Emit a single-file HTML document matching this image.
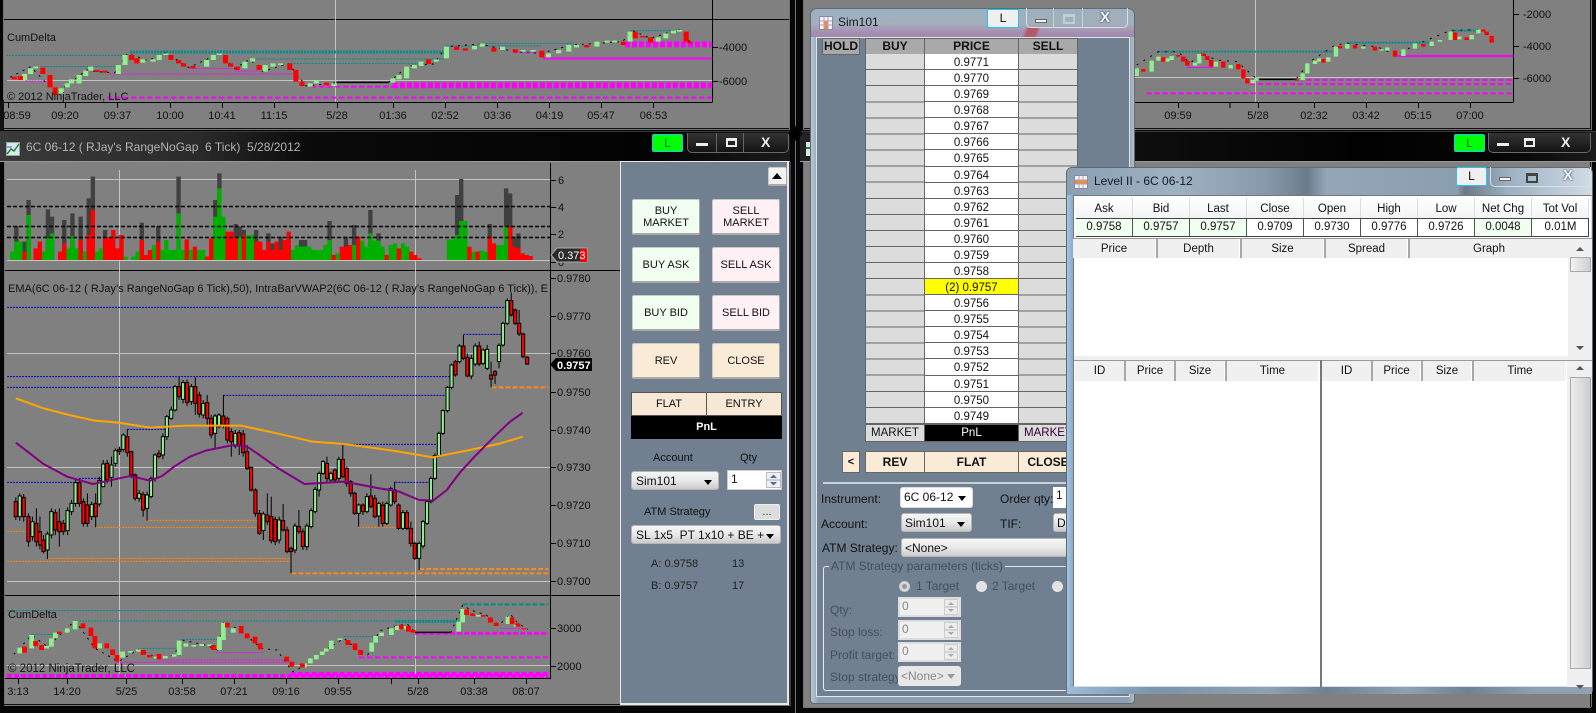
<!DOCTYPE html>
<html><head><meta charset="utf-8"><style>
*{box-sizing:border-box}
html,body{margin:0;padding:0;width:1596px;height:713px;overflow:hidden;background:#060606;font:11px "Liberation Sans",Arial,sans-serif;color:#111}
.a{position:absolute}
svg text{font-family:"Liberation Sans",Arial,sans-serif;font-size:11px;fill:#111}
.n{vector-effect:non-scaling-stroke;fill:none}
.c{display:flex;align-items:center;justify-content:center;text-align:center;line-height:12.5px}
.btn{border:1px solid #c8c8c8;border-right-color:#aaa;border-bottom:2px solid #aaa;border-radius:2px;padding-top:1px}
.dd{border:1px solid #b5b5b5;border-radius:3px;background:linear-gradient(#f6f6f6,#e8e8e8 50%,#cbcbcb);padding:1px 0 0 4px;line-height:16px;font-size:12px}
.dd:after{content:"";position:absolute;right:6px;top:8px;border:4px solid transparent;border-top:5px solid #000;border-bottom:0}
.sp{background:#f0f0f0;border:2px solid #ddd;color:#888;font-size:12px;padding-left:2px;line-height:15px}
.sp svg{position:absolute;right:1px;top:0}
.ctl{border:1px solid #6a6a6a;border-top:0;border-radius:0 0 5px 5px}
.hd{background:#a9a9a9;font-weight:bold;font-size:12px;border:1px solid #666}
.col div{height:16.087px;line-height:19px;text-align:center;border-bottom:1px solid #666;font-size:11.5px;overflow:hidden}
.sh{background:#f0f0f0;position:absolute;display:flex;align-items:center;justify-content:center;border-left:2px solid #a8a8a8;font-size:11.5px}
.q{position:absolute;width:57px;text-align:center;font-size:11.5px;border-right:1px solid #555}
</style></head><body>

<svg class="a" style="left:0;top:0" width="1596" height="713" viewBox="0 0 1596 713">
<!-- gray window backgrounds -->
<rect x="4" y="0" width="785" height="129" fill="#808080"/>
<rect x="5" y="162" width="616" height="543" fill="#808080"/>
<rect x="804" y="0" width="787" height="129" fill="#808080"/>
<rect x="804" y="162" width="787" height="545" fill="#808080"/>
<path d="M3.500 0V130M789.500 0V130M795.500 0V713M803.500 0V130M1591.500 0V130M4 129.500H789M804 129.500H1591M4 161.500H790M804 161.500H1591M4.500 162V706M790 162V706M803.500 162V708M1591.500 162V707M4 705.500H790M804 707.500H1591" stroke="#d0d0d0" stroke-opacity=".55" fill="none"/>
<path d="M4 128.500H789M804 128.500H1591M4 704.500H620M1590.500 0V129M1590.500 162V707" stroke="#111" fill="none"/>
<!-- top-left frames -->
<path d="M4 19.500H789M712.500 0V102.500M4 102.500H712" stroke="#000" fill="none"/>
<path d="M7 80.500H712M335.500 0V102" stroke="#c4c4c4" fill="none"/>
<path d="M65.500 102V108M117.500 102V108M170.500 102V108M222.500 102V108M274.500 102V108M337.500 102V108M393.500 102V108M445.500 102V108M497.500 102V108M549.500 102V108M601.500 102V108M653.500 102V108M8.500 102V108M712 47.500H718M712 81.500H718" stroke="#000" fill="none"/>
<g transform="scale(.5102,.33333)">
<path class="n" stroke="#008b8b" stroke-dasharray="2 1" d="M12 166H250M80 200H225M495 177H870M570 190H850M875 138H1060M940 130H1125M1235 92H1320"/>
<path class="n" stroke="#008b8b" stroke-width="3" stroke-dasharray="2 1" d="M255 156H870"/>
<path class="n" stroke="#f0f" stroke-dasharray="2 1" d="M50 243H95M215 222H575M370 205H460M460 213H520M1010 158H1060"/>
<path class="n" stroke="#f0f" stroke-width="2" stroke-dasharray="5 3" d="M210 293H1395M610 260H780"/>
<path class="n" stroke="#f0f" stroke-width="6" stroke-dasharray="5 2" d="M770 256H1395M1225 133H1395"/>
<path class="n" stroke="#f0f" stroke-width="2" d="M1065 175H1395"/>
<path class="n" stroke="#000" stroke-dasharray="2 5" d="M20 232L60 200L110 280L170 210L190 215L225 218L250 160L290 182L325 158L370 203L430 160L460 205L490 178L515 215L565 190L600 258L660 248"/>
<path class="n" stroke="#000" stroke-width="1.500" d="M660 247H762"/>
<path class="n" stroke="#000" stroke-dasharray="2 5" d="M762 247L800 198L850 192L875 140L940 132L1010 155L1060 160L1120 135L1220 125L1240 92L1275 115L1330 88L1355 130"/>
<path stroke="#90ee90" stroke-width="10" fill="none" d="M48 222V240M60 205V222M70 200V205M120 265V280M132 250V262M140 238V250M155 225V250M168 212V228M178 200V212M232 195V222M245 165V195M280 178V188M300 178V185M312 165V180M325 160V165M405 180V200M418 165V180M430 160V165M480 185V205M495 175V185M520 195V215M535 190V200M550 190V195M608 250V260M620 242V250M655 250V258M770 235V248M782 225V238M797 200V235M812 195V205M825 185V198M855 178V185M875 140V175M930 138V148M945 130V140M985 140V150M1025 150V155M1045 150V155M1075 160V172M1095 150V160M1115 135V155M1130 135V142M1170 125V140M1190 122V128M1205 122V127M1235 95V125M1290 112V125M1305 100V115M1320 92V100M1332 90V95"/>
<path stroke="#f00" stroke-width="10" fill="none" d="M28 230V238M40 228V240M84 203V222M98 225V262M108 262V285M190 210V216M205 212V218M258 165V180M268 175V190M335 165V180M350 180V190M360 190V200M378 198V205M442 165V190M452 190V200M465 200V210M508 195V210M568 190V210M580 210V245M592 245V258M640 248V256M840 178V192M895 140V150M912 145V152M968 143V155M1010 148V158M1062 152V172M1150 135V142M1222 125V135M1245 95V115M1260 108V112M1275 112V128M1345 95V125M1352 125V130"/>
</g>
<text x="7" y="41">CumDelta</text>
<text x="7" y="100">© 2012 NinjaTrader, LLC</text>
<text x="719" y="51">-4000</text><text x="719" y="85">-6000</text>
<g text-anchor="middle"><text x="17" y="119">08:59</text><text x="65" y="119">09:20</text><text x="117.500" y="119">09:37</text><text x="170" y="119">10:00</text><text x="222" y="119">10:41</text><text x="274" y="119">11:15</text><text x="337" y="119">5/28</text><text x="393" y="119">01:36</text><text x="445" y="119">02:52</text><text x="497.500" y="119">03:36</text><text x="549.500" y="119">04:19</text><text x="601" y="119">05:47</text><text x="653.500" y="119">06:53</text></g>
<rect x="0" y="100" width="4" height="30" fill="#111"/>

<!-- top-right chart -->
<path d="M1135 102.500H1513M1513.500 0V102.500M1230 102V108M1178.500 102V108M1258.500 102V108M1314.500 102V108M1366.500 102V108M1418.500 102V108M1470.500 102V108M1513 14.500H1519M1513 46.500H1519M1513 78.500H1519" stroke="#000" fill="none"/>
<path d="M1135 77.500H1513M1255.500 0V102" stroke="#c4c4c4" fill="none"/>
<g transform="translate(1110,0) scale(.33333)">
<path class="n" stroke="#008b8b" stroke-width="2" stroke-dasharray="2 1" d="M145 155H670M710 128H960M1025 92H1110"/>
<path class="n" stroke="#f0f" stroke-width="2" stroke-dasharray="5 3" d="M590 240H1210M420 252H1210M110 280H1210"/>
<path class="n" stroke="#f0f" d="M230 202H310"/>
<path class="n" stroke="#f0f" stroke-width="2" d="M860 168H1210"/>
<path class="n" stroke="#000" stroke-width="1.500" d="M440 238H560"/>
<path class="n" stroke="#000" stroke-dasharray="2 6" d="M80 195L145 155L205 155L240 190L275 160L320 180L380 185L445 240M560 235L600 185L675 135L710 130L800 140L860 165L915 135L1020 92L1115 88"/>
<path stroke="#90ee90" stroke-width="13" fill="none" d="M80 205V228M125 182V215M145 170V182M172 175V185M185 168V180M255 188V197M268 162V190M318 185V200M362 195V205M428 240V250M440 235V242M578 220V240M592 190V220M615 182V192M628 175V185M655 172V185M678 140V170M712 132V146M760 140V146M815 148V152M832 142V152M880 148V168M915 130V146M965 125V138M990 120V125M1022 95V120M1048 110V118M1085 105V118M1105 88V100"/>
<path stroke="#f00" stroke-width="13" fill="none" d="M100 207V215M160 172V185M205 165V170M220 170V185M232 183V197M280 160V168M292 168V180M303 180V200M340 185V203M385 192V208M400 208V235M412 235V250M560 238V242M640 177V188M690 138V145M735 135V145M795 140V152M855 152V170M940 132V140M1035 97V120M1070 112V120M1120 88V95M1130 95V105M1145 108V128"/>
</g>
<g><text x="1523" y="18">-2000</text><text x="1523" y="50">-4000</text><text x="1523" y="82">-6000</text></g>
<g text-anchor="middle"><text x="1178" y="119">09:59</text><text x="1258" y="119">5/28</text><text x="1314" y="119">02:32</text><text x="1366" y="119">03:42</text><text x="1418" y="119">05:15</text><text x="1470" y="119">07:00</text></g>

<!-- main chart: frames -->
<path d="M5 270.500H620M5 595.500H620M550.500 163V678.500M5 678.500H551" stroke="#000" fill="none"/>
<path d="M7 179.500H550M7 260.500H550M7 353.500H550M7 467.500H550M7 581.500H550M7 665.500H550M119.500 170V678M415.500 170V678" stroke="#c4c4c4" fill="none"/>
<path d="M550 180.500H556M550 207.500H556M550 234.500H556M550 262.500H556M550 278.500H556M550 316.500H556M550 353.500H556M550 392.500H556M550 430.500H556M550 467.500H556M550 505.500H556M550 543.500H556M550 581.500H556M550 628.500H556M550 666.500H556M18.500 678V684M67.500 678V684M126.500 678V684M182.500 678V684M234.500 678V684M286.500 678V684M338.500 678V684M391.500 678V684M418.500 678V684M474.500 678V684M526.500 678V684" stroke="#000" fill="none"/>
<!-- volume -->
<g transform="scale(.5102,.33333)">
<path stroke="#404040" stroke-width="8.500" fill="none" d="M32 780V678M48 780V725M56 780V600M94 780V628M102 780V650M126 780V660M142 780V640M158 780V650M174 780V595M182 780V530M206 780V690M238 780V705M278 780V668M310 780V680M350 780V530M422 780V600M430 780V520M462 780V672M470 780V680M478 780V690M502 780V690M526 780V700M534 780V730M550 780V710M590 780V720M598 780V720M646 780V663M678 780V710M694 780V675M726 780V630M742 780V700M896 780V585M904 780V537M960 780V672M992 780V565M1000 780V580M1008 780V710M1016 780V700"/>
<path stroke="#00b000" stroke-width="8.500" fill="none" d="M24 780V755M32 780V725M40 780V725M56 780V645M86 780V755M94 780V715M102 780V700M134 780V745M142 780V708M150 780V745M166 780V755M190 780V755M198 780V745M246 780V770M262 780V770M270 780V755M302 780V735M318 780V750M326 780V720M334 780V750M342 780V750M350 780V640M358 780V750M374 780V750M390 780V750M398 780V750M422 780V650M430 780V565M438 780V650M470 780V710M486 780V705M494 780V705M574 780V750M582 780V735M590 780V740M598 780V740M606 780V740M614 780V750M622 780V750M630 780V750M638 780V735M646 780V720M662 780V760M694 780V735M710 780V722M718 780V740M726 780V700M734 780V722M742 780V722M750 780V740M766 780V735M774 780V730M790 780V730M798 780V740M880 780V718M888 780V718M896 780V705M904 780V663M912 780V663M928 780V755M944 780V752M952 780V755M976 780V735M984 780V735M992 780V678"/>
<path stroke="#f00" stroke-width="8.500" fill="none" d="M48 780V755M70 780V745M78 780V725M118 780V755M126 780V730M158 780V720M174 780V705M182 780V630M206 780V712M214 780V712M222 780V690M230 780V745M238 780V705M278 780V720M286 780V765M294 780V750M310 780V725M366 780V718M382 780V740M406 780V770M414 780V715M446 780V695M454 780V695M462 780V710M478 780V705M502 780V725M510 780V725M518 780V750M526 780V725M534 780V750M542 780V725M550 780V750M558 780V720M566 780V695M654 780V765M670 780V740M678 780V740M686 780V735M702 780V710M758 780V765M782 780V745M806 780V755M814 780V765M822 780V775M920 780V740M936 780V755M960 780V710M968 780V730M1000 780V680M1008 780V740M1016 780V745M1024 780V760M1032 780V765M1040 780V768"/>
</g>
<path d="M7 206.500H550M7 226.500H550M7 237.500H550" stroke="#000" stroke-width="1.500" stroke-dasharray="4 2" fill="none"/>
<text x="558" y="184">6</text><text x="558" y="211">4</text><text x="558" y="238">2</text><text x="558" y="266">0</text>
<path d="M551 255L557 248H587V262H557Z" fill="#2a2a2a" stroke="#aaa"/><rect x="580" y="249" width="7" height="13" fill="#f00"/>
<text x="558" y="259" style="fill:#fff">0.373</text>
<!-- price panel -->
<g transform="translate(0,260) scale(.39540,.33333)">
<path class="n" stroke="#00c" stroke-dasharray="2 1" d="M18 142H1280M18 350H1140M18 382H440M565 406H1130M322 508H420M200 655H258M18 667H190M870 553H1108M1000 667H1088M1172 223H1270"/>
<path class="n" stroke="#f80" stroke-dasharray="2 1" d="M373 781H650M240 802H660M120 895H735M18 904H735M18 814H70M908 802H1010"/>
<path class="n" stroke="#f58a1f" stroke-width="2" stroke-dasharray="5 2" d="M737 940H1387M1060 927H1387M1243 382H1387"/>
<path class="n" stroke="#000" d="M40 712V780M50 700V782M60 702V785M72 760V860M82 770V842M92 745V860M101 770V868M110 825V880M120 815V897M130 745V835M140 748V825M150 745V860M160 780V825M171 742V825M181 720V765M191 655V740M201 655V740M211 715V800M221 700V800M232 725V780M242 700V802M251 650V740M261 600V682M271 600V670M282 590V680M292 565V620M302 560V585M312 520V575M322 508V590M332 572V655M342 640V722M352 690V725M362 695V770M372 695V782M382 650V715M392 580V665M402 570V595M412 520V598M422 465V540M433 440V480M443 375V455M453 350V420M463 360V430M473 358V438M484 372V435M494 352V465M504 395V472M514 420V475M524 405V495M534 465V535M544 462V565M554 460V505M565 405V505M575 470V550M585 505V590M595 510V565M605 510V585M615 510V590M625 555V630M635 620V695M646 685V770M656 750V825M666 755V840M676 700V795M686 710V850M696 770V855M706 770V850M716 732V815M726 800V880M736 860V940M746 790V880M756 750V822M766 805V870M776 790V870M787 745V805M797 680V760M807 635V710M817 600V645M827 590V665M837 635V668M847 625V665M857 590V665M867 553V655M877 620V680M887 660V710M897 695V765M907 730V800M918 730V765M928 700V760M938 643V745M948 705V775M958 725V800M968 725V800M978 725V795M988 680V740M998 665V732M1008 730V810M1019 750V810M1029 750V810M1039 785V860M1049 845V900M1060 845V930M1070 780V865M1080 720V795M1090 650V730M1100 580V660M1110 515V592M1120 448V525M1132 378V458M1142 310V388M1152 300V350M1162 252V310M1172 225V300M1182 280V352M1192 285V358M1202 250V318M1212 245V318M1222 265V315M1232 255V330M1242 305V382M1252 330V372M1262 250V325M1272 185V260M1283 115V195M1293 97V170M1303 145V195M1313 150V228M1323 218V295M1333 288V315"/>
<path class="n" stroke="#000" style="fill:#90ee90" d="M46 708h8v62h-8zM78 785h8v45h-8zM116 822h8v48h-8zM126 755h8v70h-8zM167 752h8v60h-8zM177 730h8v25h-8zM187 668h8v62h-8zM228 733h8v37h-8zM247 662h8v70h-8zM257 612h8v68h-8zM278 615h8v37h-8zM288 572h8v38h-8zM308 525h8v43h-8zM348 700h8v15h-8zM368 705h8v40h-8zM378 655h8v55h-8zM388 585h8v70h-8zM408 530h8v55h-8zM418 470h8v60h-8zM429 450h8v25h-8zM439 380h8v70h-8zM459 368h8v50h-8zM480 380h8v45h-8zM510 430h8v35h-8zM540 468h8v52h-8zM550 465h8v35h-8zM591 520h8v38h-8zM662 762h8v50h-8zM702 780h8v60h-8zM742 798h8v72h-8zM772 798h8v62h-8zM783 752h8v48h-8zM793 688h8v67h-8zM803 640h8v50h-8zM813 605h8v35h-8zM833 640h8v20h-8zM853 598h8v57h-8zM903 735h8v25h-8zM924 710h8v45h-8zM954 730h8v38h-8zM974 730h8v60h-8zM984 685h8v50h-8zM1015 758h8v47h-8zM1056 850h8v45h-8zM1066 785h8v73h-8zM1076 725h8v65h-8zM1086 655h8v70h-8zM1096 587h8v68h-8zM1106 520h8v67h-8zM1116 452h8v68h-8zM1128 382h8v70h-8zM1138 315h8v67h-8zM1158 258h8v47h-8zM1188 295h8v53h-8zM1198 258h8v54h-8zM1218 270h8v40h-8zM1228 268h8v57h-8zM1258 256h8v49h-8zM1268 190h8v65h-8zM1279 122h8v68h-8z"/>
<path class="n" stroke="#000" style="fill:#f00" d="M36 725h8v45h-8zM56 712h8v58h-8zM68 770h8v75h-8zM88 790h8v55h-8zM97 815h8v40h-8zM106 840h8v35h-8zM136 758h8v52h-8zM146 785h8v30h-8zM156 790h8v25h-8zM197 668h8v62h-8zM207 725h8v65h-8zM217 735h8v55h-8zM238 730h8v40h-8zM267 610h8v50h-8zM298 568h8v7h-8zM318 530h8v48h-8zM328 575h8v70h-8zM338 645h8v70h-8zM358 703h8v47h-8zM398 580h8v10h-8zM449 380h8v30h-8zM469 368h8v60h-8zM490 380h8v50h-8zM500 405h8v57h-8zM520 428h8v47h-8zM530 475h8v50h-8zM561 468h8v27h-8zM571 475h8v65h-8zM581 515h8v30h-8zM601 518h8v37h-8zM611 522h8v56h-8zM621 575h8v50h-8zM631 622h8v68h-8zM642 690h8v70h-8zM652 760h8v60h-8zM672 765h8v20h-8zM682 770h8v72h-8zM692 778h8v67h-8zM712 782h8v28h-8zM722 810h8v65h-8zM732 865h8v10h-8zM752 800h8v15h-8zM762 815h8v45h-8zM823 610h8v45h-8zM843 630h8v30h-8zM863 598h8v52h-8zM873 625h8v45h-8zM883 665h8v35h-8zM893 700h8v60h-8zM914 735h8v20h-8zM934 708h8v32h-8zM944 715h8v55h-8zM964 735h8v55h-8zM994 690h8v35h-8zM1004 735h8v70h-8zM1025 758h8v47h-8zM1035 805h8v45h-8zM1045 850h8v45h-8zM1148 305h8v40h-8zM1168 258h8v37h-8zM1178 292h8v56h-8zM1208 258h8v54h-8zM1238 345h8v12h-8zM1248 335h8v10h-8zM1289 122h8v43h-8zM1299 150h8v40h-8zM1309 190h8v32h-8zM1319 222h8v68h-8zM1329 292h8v20h-8z"/>
<path class="n" stroke="#ffa500" stroke-width="2" stroke-linejoin="round" d="M40 415L110 445L175 465L240 482L300 488L380 503L470 497L610 497L700 520L790 545L870 552L1000 573L1095 592L1180 572L1260 552L1322 530"/>
<path class="n" stroke="#800080" stroke-width="2" stroke-linejoin="round" d="M40 548L70 575L110 612L170 650L235 672L290 658L330 648L380 662L410 648L440 620L480 590L520 572L590 555L625 560L650 580L700 622L770 672L870 665L960 685L1010 695L1060 720L1095 722L1130 690L1165 635L1200 590L1250 530L1290 485L1322 458"/>
<!-- cum delta bottom -->
<path class="n" stroke="#008b8b" stroke-dasharray="2 1" d="M18 1052H1165M200 1083H1000M80 1123H135M455 1138H555M355 1165H450M870 1130H945"/>
<path class="n" stroke="#008b8b" stroke-width="3" stroke-dasharray="2 1" d="M1000 1084H1160"/>
<path class="n" stroke="#008b8b" stroke-width="2" stroke-dasharray="5 2" d="M1170 1033H1387"/>
<path class="n" stroke="#f0f" stroke-dasharray="2 1" d="M545 1178H665M400 1200H725M295 1207H725M1265 1105H1330"/>
<path class="n" stroke="#f0f" stroke-width="3" stroke-dasharray="5 2" d="M1050 1120H1387"/>
<path class="n" stroke="#f0f" stroke-width="2" stroke-dasharray="5 3" d="M908 1192H1387"/>
<path class="n" stroke="#f0f" stroke-width="4" stroke-dasharray="5 2" d="M18 1248H1387M735 1242H1387"/>
<path class="n" stroke="#000" stroke-dasharray="2 5" d="M35 1183L80 1125L120 1160L190 1082L240 1165L300 1205L350 1168L400 1195L440 1185L460 1140L520 1155L550 1170L565 1085L610 1112L660 1165L700 1170L740 1235L770 1218L830 1165L870 1135L900 1165L930 1185L960 1112L1000 1098L1030 1092L1050 1118"/>
<path class="n" stroke="#000" stroke-dasharray="2 5" d="M1140 1118L1170 1035L1190 1050L1230 1065L1260 1098L1290 1062L1310 1090L1335 1108"/>
<path class="n" stroke="#000" stroke-width="1.500" d="M1050 1117H1140"/>
<path stroke="#90ee90" stroke-width="12" fill="none" d="M50 1163V1180M80 1125V1165M118 1158V1165M130 1135V1160M140 1118V1135M170 1105V1118M190 1083V1108M252 1150V1165M310 1175V1193M330 1173V1178M350 1168V1175M395 1190V1196M418 1188V1195M440 1183V1190M453 1142V1185M470 1150V1160M490 1155V1160M510 1152V1158M530 1153V1158M555 1130V1170M565 1088V1140M590 1105V1118M770 1210V1222M785 1195V1210M800 1185V1198M815 1175V1185M825 1165V1175M838 1142V1167M860 1135V1140M940 1148V1175M950 1128V1148M965 1118V1128M990 1105V1125M1005 1098V1110M1025 1098V1108M1160 1085V1115M1170 1047V1087M1210 1065V1070M1285 1070V1092M1305 1095V1100"/>
<path stroke="#f00" stroke-width="12" fill="none" d="M62 1160V1178M90 1143V1158M105 1155V1170M150 1115V1122M210 1090V1105M230 1103V1128M240 1128V1165M270 1150V1165M285 1168V1185M296 1185V1205M362 1170V1185M378 1185V1192M402 1182V1198M540 1155V1170M575 1088V1102M610 1098V1120M625 1120V1135M645 1130V1150M658 1150V1168M725 1190V1205M738 1205V1220M765 1210V1222M880 1140V1155M898 1150V1170M912 1170V1185M1015 1095V1108M1033 1098V1115M1045 1110V1118M1180 1048V1065M1195 1060V1068M1222 1065V1070M1240 1072V1088M1255 1088V1098M1295 1072V1092M1310 1090V1100M1325 1105V1108"/>
</g>
<text x="8" y="292" textLength="540" lengthAdjust="spacing">EMA(6C 06-12 ( RJay's RangeNoGap  6 Tick),50), IntraBarVWAP2(6C 06-12 ( RJay's RangeNoGap  6 Tick)), E</text>
<g><text x="557" y="282">0.9780</text><text x="557" y="320">0.9770</text><text x="557" y="357">0.9760</text><text x="557" y="396">0.9750</text><text x="557" y="434">0.9740</text><text x="557" y="471">0.9730</text><text x="557" y="509">0.9720</text><text x="557" y="547">0.9710</text><text x="557" y="585">0.9700</text></g>
<path d="M550 364.500L556 358H592V371H556Z" fill="#000"/>
<text x="557" y="369" style="fill:#fff;font-weight:bold">0.9757</text>
<text x="8" y="618">CumDelta</text>
<text x="8" y="672" style="font-size:11.500px">© 2012 NinjaTrader, LLC</text>
<text x="557" y="632">3000</text><text x="557" y="670">2000</text>
<g text-anchor="middle"><text x="18" y="695">3:13</text><text x="67" y="695">14:20</text><text x="126.500" y="695">5/25</text><text x="182" y="695">03:58</text><text x="234" y="695">07:21</text><text x="286" y="695">09:16</text><text x="338" y="695">09:55</text><text x="418" y="695">5/28</text><text x="474" y="695">03:38</text><text x="526" y="695">08:07</text></g>
</svg>

<!-- main title bar -->
<div class="a" style="left:0;top:131px;width:790px;height:31px;background:linear-gradient(90deg,#3a3a3a,#2a2a2a 200px,#0a0a0a 310px,#030303 640px,#1a1a1a);border-top:1px solid #3a3a3a;border-bottom:1px solid #999"></div>
<svg class="a" style="left:6px;top:142px" width="14" height="14"><rect x=".5" y=".5" width="13" height="13" fill="#dfe6ee" stroke="#8aa"/><path d="M1 12L5 7L8 9L13 2" stroke="#1a8a2a" stroke-width="1.500" fill="none"/><path d="M1 5H6" stroke="#36c"/></svg>
<div class="a" style="left:26px;top:140px;font-size:12px;color:#b4b4b4;white-space:pre;line-height:15px">6C 06-12 ( RJay's RangeNoGap  6 Tick)  5/28/2012</div>
<div class="a c" style="left:652px;top:134px;width:31px;height:18px;background:#0f0;border:1px solid #27c3e8;border-radius:2px;font-size:12px;color:#063">L</div>
<div class="a ctl" style="left:687px;top:133px;width:102px;height:20px;background:linear-gradient(#333,#141414)"></div>
<div class="a" style="left:696px;top:143px;width:12px;height:3px;background:#eee"></div>
<div class="a" style="left:726px;top:138px;width:11px;height:9px;border:2px solid #eee;border-top-width:3px"></div>
<div class="a" style="left:761px;top:135px;color:#eee;font-weight:bold;font-size:14px;line-height:15px">X</div>
<div class="a" style="left:715.500px;top:133px;width:1px;height:20px;background:#666"></div><div class="a" style="left:742.500px;top:133px;width:1px;height:20px;background:#666"></div>

<!-- right control panel -->
<div class="a" style="left:620px;top:161px;width:169px;height:544px;background:#708090;border:1px solid #e8e8e8;border-right-width:2px;border-bottom-width:2px"></div>
<div class="a btn" style="left:768px;top:167px;width:19px;height:19px;background:#f3f3f3"></div>
<div class="a" style="left:772px;top:173px;border:5.500px solid transparent;border-bottom:6px solid #000;border-top:0"></div>
<div class="a c btn" style="left:632px;top:199px;width:68px;height:36px;background:#f0fff0">BUY<br>MARKET</div>
<div class="a c btn" style="left:712px;top:199px;width:68px;height:36px;background:#fff0f5">SELL<br>MARKET</div>
<div class="a c btn" style="left:632px;top:247px;width:68px;height:36px;background:#f0fff0">BUY ASK</div>
<div class="a c btn" style="left:712px;top:247px;width:68px;height:36px;background:#fff0f5">SELL ASK</div>
<div class="a c btn" style="left:632px;top:295px;width:68px;height:36px;background:#f0fff0">BUY BID</div>
<div class="a c btn" style="left:712px;top:295px;width:68px;height:36px;background:#fff0f5">SELL BID</div>
<div class="a c btn" style="left:632px;top:343px;width:68px;height:36px;background:#faebd7">REV</div>
<div class="a c btn" style="left:712px;top:343px;width:68px;height:36px;background:#faebd7">CLOSE</div>
<div class="a c" style="left:631px;top:392px;width:76px;height:24px;background:#f7e8d6;border:1px solid #555">FLAT</div>
<div class="a c" style="left:706px;top:392px;width:76px;height:24px;background:#f7e8d6;border:1px solid #555">ENTRY</div>
<div class="a c" style="left:631px;top:416px;width:151px;height:23px;background:#000;color:#fff;font-weight:bold">PnL</div>
<div class="a" style="left:653px;top:452px">Account</div><div class="a" style="left:740px;top:452px">Qty</div>
<div class="a dd" style="left:631px;top:471px;width:88px;height:19px">Sim101</div>
<div class="a" style="left:727px;top:470px;width:55px;height:20px;background:#fff;border:1px solid #ccc;font-size:12px;padding:1px 3px">1</div>
<svg class="a" style="left:766px;top:472px" width="15" height="16"><rect x=".5" y=".5" width="14" height="15" fill="#eef0fa" stroke="#bbb"/><path d="M1 8H14" stroke="#aaa"/><path d="M4 6L7.500 2.500L11 6ZM4 10L7.500 13.500L11 10Z" fill="#5a6a9a"/></svg>
<div class="a" style="left:644px;top:506px">ATM Strategy</div>
<div class="a c" style="left:754px;top:504px;width:26px;height:16px;background:#ddd;border:1px solid #eee;border-radius:2px;color:#333">...</div>
<div class="a dd" style="left:631px;top:525px;width:150px;height:19px;white-space:nowrap;font-size:12px"><span style="display:block;width:128px;overflow:hidden">SL 1x5&nbsp; PT 1x10 + BE + 1 p</span></div>
<div class="a" style="left:651px;top:558px;color:#222">A: 0.9758</div><div class="a" style="left:732px;top:558px;color:#222">13</div>
<div class="a" style="left:651px;top:580px;color:#222">B: 0.9757</div><div class="a" style="left:732px;top:580px;color:#222">17</div>

<!-- back right window title -->
<div class="a" style="left:800px;top:131px;width:796px;height:31px;background:linear-gradient(90deg,#222,#0a0a0a 400px,#020202 560px,#050505 700px,#1a1a1a);border-top:1px solid #3a3a3a;border-bottom:1px solid #999"></div>
<svg class="a" style="left:806px;top:142px" width="4" height="14"><rect width="4" height="14" fill="#dfe6ee"/><path d="M0 6H4" stroke="#1a8a2a" stroke-width="2"/></svg>
<svg class="a" style="left:788px;top:126px" width="15" height="15"><path d="M7.500 0L11 4L15 7.500L11 11L7.500 15L4 11L0 7.500L4 4Z" fill="#000"/></svg>
<div class="a" style="left:1454px;top:134px;width:31px;height:18px;background:#0f0;border:1px solid #27c3e8;border-radius:2px"></div>
<div class="a c" style="left:1454px;top:134px;width:31px;height:18px;font-size:12px;color:#063">L</div>
<div class="a ctl" style="left:1488px;top:133px;width:103px;height:20px;background:linear-gradient(#333,#141414)"></div>
<div class="a" style="left:1497px;top:143px;width:12px;height:3px;background:#eee"></div>
<div class="a" style="left:1524px;top:138px;width:11px;height:9px;border:2px solid #eee;border-top-width:3px"></div>
<div class="a" style="left:1561px;top:135px;color:#eee;font-weight:bold;font-size:14px;line-height:15px">X</div>

<!-- Sim101 window -->
<div class="a" style="left:810px;top:8px;width:325px;height:696px;border-radius:7px 7px 4px 4px;background:linear-gradient(90deg,#b8c8d4,#8d9fae 8px,#8d9fae 317px,#b5bcc3);border:1px solid #5e6a74"></div>
<div class="a" style="left:811px;top:9px;width:323px;height:28px;border-radius:6px 6px 0 0;background:linear-gradient(#9bb0c0,#a3afbb 55%,#a78db0 85%,#9a8cb0)"></div>
<div class="a" style="left:1018px;top:28px;width:24px;height:9px;background:linear-gradient(110deg,transparent 25%,#b5586a 40%,#b5586a 70%,transparent 85%)"></div>
<div class="a" style="left:816px;top:37px;width:314px;height:660px;background:#708090;border:1px solid #dfe5ea"></div>
<svg class="a" style="left:819px;top:16px" width="14" height="14"><rect x=".5" y=".5" width="13" height="13" fill="#f4f4f8" stroke="#8a8aa8"/><rect x="5" y="5" width="4" height="8" fill="#f58a1f"/><path d="M5 1V13M9 1V13M1 5H13M1 9H13" stroke="#b0a0c0"/></svg>
<div class="a" style="left:838px;top:15px;font-size:12px;color:#151a25;line-height:15px">Sim101</div>
<div class="a c" style="left:987px;top:9px;width:32px;height:19px;background:#f0f0f0;border:1px solid #28c4ea;border-radius:2px;font-size:12px">L</div>
<div class="a ctl" style="left:1026px;top:8px;width:102px;height:20px;border-color:#d8e0e6"></div>
<div class="a" style="left:1035px;top:19px;width:12px;height:4px;background:#f4f4f4;border:1px solid #666"></div>
<div class="a" style="left:1063px;top:14px;width:12px;height:10px;border:2px solid #c2ced6;border-top-width:3px"></div>
<div class="a" style="left:1100px;top:10px;color:#f4f4f4;font-weight:bold;font-size:15px;line-height:15px;text-shadow:0 0 2px #222">X</div>
<div class="a" style="left:1052.500px;top:8px;width:1px;height:20px;background:#c5d0d8"></div><div class="a" style="left:1081.500px;top:8px;width:1px;height:20px;background:#c5d0d8"></div>
<div class="a c hd" style="left:822px;top:38px;width:38px;height:17px">HOLD</div>
<div class="a c hd" style="left:865px;top:38px;width:60px;height:17px">BUY</div>
<div class="a c hd" style="left:924px;top:38px;width:95px;height:17px">PRICE</div>
<div class="a c hd" style="left:1018px;top:38px;width:60px;height:17px">SELL</div>
<div class="a" style="left:865px;top:54px;width:60px;height:370px;background:repeating-linear-gradient(#dcdcdc 0,#dcdcdc 15.087px,#666 15.087px,#666 16.087px);border:solid #666;border-width:0 1px"></div>
<div class="a" style="left:1018px;top:54px;width:60px;height:370px;background:repeating-linear-gradient(#dcdcdc 0,#dcdcdc 15.087px,#666 15.087px,#666 16.087px);border:solid #666;border-width:0 1px"></div>
<div class="a col" style="left:924px;top:54px;width:95px;height:370px;background:#fff;border:solid #666;border-width:0 1px">
<div>0.9771</div><div>0.9770</div><div>0.9769</div><div>0.9768</div><div>0.9767</div><div>0.9766</div><div>0.9765</div><div>0.9764</div><div>0.9763</div><div>0.9762</div><div>0.9761</div><div>0.9760</div><div>0.9759</div><div>0.9758</div><div style="background:#ff0">(2) 0.9757</div><div>0.9756</div><div>0.9755</div><div>0.9754</div><div>0.9753</div><div>0.9752</div><div>0.9751</div><div>0.9750</div><div>0.9749</div></div>
<div class="a c" style="left:865px;top:424px;width:60px;height:18px;background:#dcdcdc;border:1px solid #666;font-size:11.500px">MARKET</div>
<div class="a c" style="left:924px;top:424px;width:95px;height:18px;background:#000;color:#fff;font-size:11.500px;border:1px solid #666">PnL</div>
<div class="a c" style="left:1018px;top:424px;width:60px;height:18px;background:#dcdcdc;border:1px solid #666;font-size:11.500px;color:#303">MARKET</div>
<div class="a c" style="left:842px;top:451px;width:18px;height:22px;background:#faebd7;border:1px solid #666;font-weight:bold">&lt;</div>
<div class="a c" style="left:865px;top:451px;width:60px;height:22px;background:#faebd7;border:1px solid #666;font-weight:bold;font-size:12px">REV</div>
<div class="a c" style="left:924px;top:451px;width:95px;height:22px;background:#faebd7;border:1px solid #666;font-weight:bold;font-size:12px">FLAT</div>
<div class="a c" style="left:1018px;top:451px;width:60px;height:22px;background:#faebd7;border:1px solid #666;font-weight:bold;font-size:12px">CLOSE</div>
<div class="a" style="left:823px;top:482px;width:307px;height:2px;background:#c9d1d8"></div>
<div class="a" style="left:821px;top:492px;font-size:12px">Instrument:</div>
<div class="a dd" style="left:900px;top:487px;width:73px;height:21px;background:#fff;border-color:#ddd;font-size:12px;padding-left:3px">6C 06-12</div>
<div class="a" style="left:1000px;top:492px;font-size:12px">Order qty:</div>
<div class="a" style="left:1053px;top:487px;width:30px;height:21px;background:#fff;font-size:12px;padding:1px 3px">1</div>
<div class="a" style="left:821px;top:517px;font-size:12px">Account:</div>
<div class="a dd" style="left:901px;top:513px;width:71px;height:19px;padding-left:3px">Sim101</div>
<div class="a" style="left:1000px;top:517px;font-size:12px">TIF:</div>
<div class="a dd" style="left:1053px;top:513px;width:60px;height:19px;padding-left:3px">Day</div>
<div class="a" style="left:822px;top:541px;font-size:12px">ATM Strategy:</div>
<div class="a dd" style="left:901px;top:538px;width:200px;height:19px;padding-left:3px">&lt;None&gt;</div>
<div class="a" style="left:823px;top:566px;width:300px;height:125px;border:1px solid #e8e8e8;border-radius:3px"></div>
<div class="a" style="left:829px;top:559px;padding:0 2px;background:#708090;color:#454f5a;font-size:12px;line-height:14px">ATM Strategy parameters (ticks)</div>
<div class="a" style="left:899px;top:581px;width:11px;height:11px;border-radius:50%;background:#d8d8d8;border:1px solid #ccc"></div><div class="a" style="left:902px;top:584px;width:5px;height:5px;border-radius:50%;background:#999"></div>
<div class="a" style="left:916px;top:579px;font-size:12px;color:#454f5a">1 Target</div>
<div class="a" style="left:976px;top:581px;width:11px;height:11px;border-radius:50%;background:#e3e3e3"></div>
<div class="a" style="left:992px;top:579px;font-size:12px;color:#454f5a">2 Target</div>
<div class="a" style="left:1052px;top:581px;width:11px;height:11px;border-radius:50%;background:#e3e3e3"></div>
<div class="a" style="left:830px;top:603px;font-size:12px;color:#454f5a">Qty:</div><div class="a sp" style="left:898px;top:597px;width:63px;height:20px">0<svg width="14" height="16"><rect x=".5" y=".5" width="13" height="15" fill="#ececec" stroke="#ccc"/><path d="M1 8H13" stroke="#bbb"/><path d="M4 6L7 3L10 6ZM4 10L7 13L10 10Z" fill="#aaa"/></svg></div>
<div class="a" style="left:830px;top:625px;font-size:12px;color:#454f5a">Stop loss:</div><div class="a sp" style="left:898px;top:620px;width:63px;height:20px">0<svg width="14" height="16"><rect x=".5" y=".5" width="13" height="15" fill="#ececec" stroke="#ccc"/><path d="M1 8H13" stroke="#bbb"/><path d="M4 6L7 3L10 6ZM4 10L7 13L10 10Z" fill="#aaa"/></svg></div>
<div class="a" style="left:830px;top:648px;font-size:12px;color:#454f5a">Profit target:</div><div class="a sp" style="left:898px;top:642px;width:63px;height:20px">0<svg width="14" height="16"><rect x=".5" y=".5" width="13" height="15" fill="#ececec" stroke="#ccc"/><path d="M1 8H13" stroke="#bbb"/><path d="M4 6L7 3L10 6ZM4 10L7 13L10 10Z" fill="#aaa"/></svg></div>
<div class="a" style="left:830px;top:670px;font-size:12px;color:#454f5a">Stop strategy:</div>
<div class="a" style="left:898px;top:666px;width:63px;height:20px;background:#e8e8e8;border-radius:3px;font-size:12px;color:#888;padding:3px 0 0 3px">&lt;None&gt;<span class="a" style="right:6px;top:8px;border:4px solid transparent;border-top:5px solid #999;border-bottom:0"></span></div>

<!-- Level II -->
<div class="a" style="left:1066px;top:167px;width:527px;height:527px;border-radius:6px 6px 4px 4px;background:linear-gradient(90deg,#a6c4e0,#7da3c7 8px,#8aa0b4 40px,#8aa0b4 500px,#b5c2ce);border:1px solid #5e6a74"></div>
<div class="a" style="left:1067px;top:168px;width:525px;height:27px;border-radius:5px 5px 0 0;background:linear-gradient(90deg,#8a9fb2,#9fb2c3 110px,#8699ab 200px,#6b7c8c 240px,#94a7b8 260px,#8a9eb0 390px,#6a7a8a 398px,#9cb0c2 440px,#d0dce5)"></div>
<div class="a" style="left:1067px;top:687px;width:525px;height:7px;background:linear-gradient(90deg,#9cbcd8,#7b94ab 90px,#8fa1b2 200px,#6f8192 260px,#8fa1b2 340px,#6f8192 400px,#8fa1b2 470px)"></div>
<svg class="a" style="left:1074px;top:175px" width="14" height="14"><rect x=".5" y=".5" width="13" height="13" fill="#f4f4f8" stroke="#8a8aa8"/><rect x="1" y="5" width="12" height="4" fill="#f58a1f"/><path d="M5 1V13M9 1V13M1 5H13M1 9H13" stroke="#b0a0c0"/></svg>
<div class="a" style="left:1094px;top:174px;font-size:12px;color:#151a25;line-height:15px">Level II - 6C 06-12</div>
<div class="a c" style="left:1456px;top:167px;width:31px;height:19px;background:#f0f0f0;border:1px solid #28c4ea;border-radius:2px;font-size:12px">L</div>
<div class="a ctl" style="left:1490px;top:167px;width:101px;height:20px;border-color:#d8e0e6"></div>
<div class="a" style="left:1499px;top:177px;width:12px;height:4px;background:#f4f4f4;border:1px solid #666"></div>
<div class="a" style="left:1526px;top:173px;width:12px;height:10px;border:2px solid #444;border-top-width:3px"></div>
<div class="a" style="left:1563px;top:168px;color:#f4f4f4;font-weight:bold;font-size:15px;line-height:15px;text-shadow:0 0 2px #222">X</div>
<div class="a" style="left:1073px;top:195px;width:519px;height:492px;background:#fff;border:1px solid #777;border-right-color:#ddd;border-bottom-color:#ddd"></div>
<!-- quote table -->
<div class="a" style="left:1076px;top:198px;width:513px;height:39px;background:#fff;border:1px solid #444;border-width:0 1px 1px 1px"></div>
<div class="q" style="left:1076px;top:198px;height:20px;line-height:22px;width:57px;background:linear-gradient(#fff,#f1f3f5);border-right-color:#ddd">Ask</div><div class="q" style="left:1133px;top:198px;height:20px;line-height:22px;background:linear-gradient(#fff,#f1f3f5);border-right-color:#ddd">Bid</div><div class="q" style="left:1190px;top:198px;height:20px;line-height:22px;background:linear-gradient(#fff,#f1f3f5);border-right-color:#ddd">Last</div><div class="q" style="left:1247px;top:198px;height:20px;line-height:22px;background:linear-gradient(#fff,#f1f3f5);border-right-color:#ddd">Close</div><div class="q" style="left:1304px;top:198px;height:20px;line-height:22px;background:linear-gradient(#fff,#f1f3f5);border-right-color:#ddd">Open</div><div class="q" style="left:1361px;top:198px;height:20px;line-height:22px;background:linear-gradient(#fff,#f1f3f5);border-right-color:#ddd">High</div><div class="q" style="left:1418px;top:198px;height:20px;line-height:22px;background:linear-gradient(#fff,#f1f3f5);border-right-color:#ddd">Low</div><div class="q" style="left:1475px;top:198px;height:20px;line-height:22px;background:linear-gradient(#fff,#f1f3f5);border-right-color:#ddd">Net Chg</div><div class="q" style="left:1532px;top:198px;height:20px;line-height:22px;background:linear-gradient(#fff,#f1f3f5);border-right-color:#ddd">Tot Vol</div>
<div class="q" style="left:1076px;top:218px;height:18px;line-height:18px;background:#f0fff0">0.9758</div><div class="q" style="left:1133px;top:218px;height:18px;line-height:18px;background:#f0fff0">0.9757</div><div class="q" style="left:1190px;top:218px;height:18px;line-height:18px;background:#f0fff0">0.9757</div><div class="q" style="left:1247px;top:218px;height:18px;line-height:18px">0.9709</div><div class="q" style="left:1304px;top:218px;height:18px;line-height:18px">0.9730</div><div class="q" style="left:1361px;top:218px;height:18px;line-height:18px">0.9776</div><div class="q" style="left:1418px;top:218px;height:18px;line-height:18px">0.9726</div><div class="q" style="left:1475px;top:218px;height:18px;line-height:18px;background:#f0fff0">0.0048</div><div class="q" style="left:1532px;top:218px;height:18px;line-height:18px;border-right:0">0.01M</div>
<div class="a" style="left:1076px;top:217.500px;width:513px;height:1px;background:#444"></div>
<!-- depth headers -->
<div class="a" style="left:1073px;top:238px;width:519px;height:1px;background:#999"></div>
<div class="sh" style="left:1073px;top:239px;width:82px;height:19px;border-left:0">Price</div>
<div class="sh" style="left:1156px;top:239px;width:83px;height:19px">Depth</div>
<div class="sh" style="left:1240px;top:239px;width:83px;height:19px">Size</div>
<div class="sh" style="left:1324px;top:239px;width:83px;height:19px">Spread</div>
<div class="sh" style="left:1408px;top:239px;width:160px;height:19px">Graph</div>
<div class="a" style="left:1568px;top:239px;width:24px;height:117px;background:#f0f0f0"></div>
<div class="a" style="left:1570px;top:257px;width:21px;height:15px;background:linear-gradient(90deg,#f2f2f2,#cfcfcf);border:1px solid #aaa"></div>
<div class="a" style="left:1576px;top:247px;border:4px solid transparent;border-bottom:4px solid #555;border-top:0"></div>
<div class="a" style="left:1576px;top:346px;border:4px solid transparent;border-top:4px solid #555;border-bottom:0"></div>
<div class="a" style="left:1074px;top:356px;width:518px;height:5px;background:#f0f0f0;border-bottom:1px solid #999"></div>
<div class="sh" style="left:1075px;top:361px;width:49px;height:20px;border-left:0">ID</div>
<div class="sh" style="left:1124px;top:361px;width:50px;height:20px">Price</div>
<div class="sh" style="left:1174px;top:361px;width:50px;height:20px">Size</div>
<div class="sh" style="left:1225px;top:361px;width:93px;height:20px">Time</div>
<div class="sh" style="left:1322px;top:361px;width:49px;height:20px;border-left:0">ID</div>
<div class="sh" style="left:1371px;top:361px;width:49px;height:20px">Price</div>
<div class="sh" style="left:1421px;top:361px;width:50px;height:20px">Size</div>
<div class="sh" style="left:1472px;top:361px;width:94px;height:20px">Time</div>
<div class="a" style="left:1320px;top:360px;width:2px;height:327px;background:#777"></div>
<div class="a" style="left:1567px;top:361px;width:25px;height:326px;background:#f0f0f0"></div>
<div class="a" style="left:1570px;top:377px;width:21px;height:292px;background:linear-gradient(90deg,#ececec,#cfcfcf);border:1px solid #aaa"></div>
<div class="a" style="left:1576px;top:366px;border:4px solid transparent;border-bottom:4px solid #555;border-top:0"></div>
<div class="a" style="left:1576px;top:685px;border:4px solid transparent;border-top:4px solid #555;border-bottom:0"></div>
</body></html>
